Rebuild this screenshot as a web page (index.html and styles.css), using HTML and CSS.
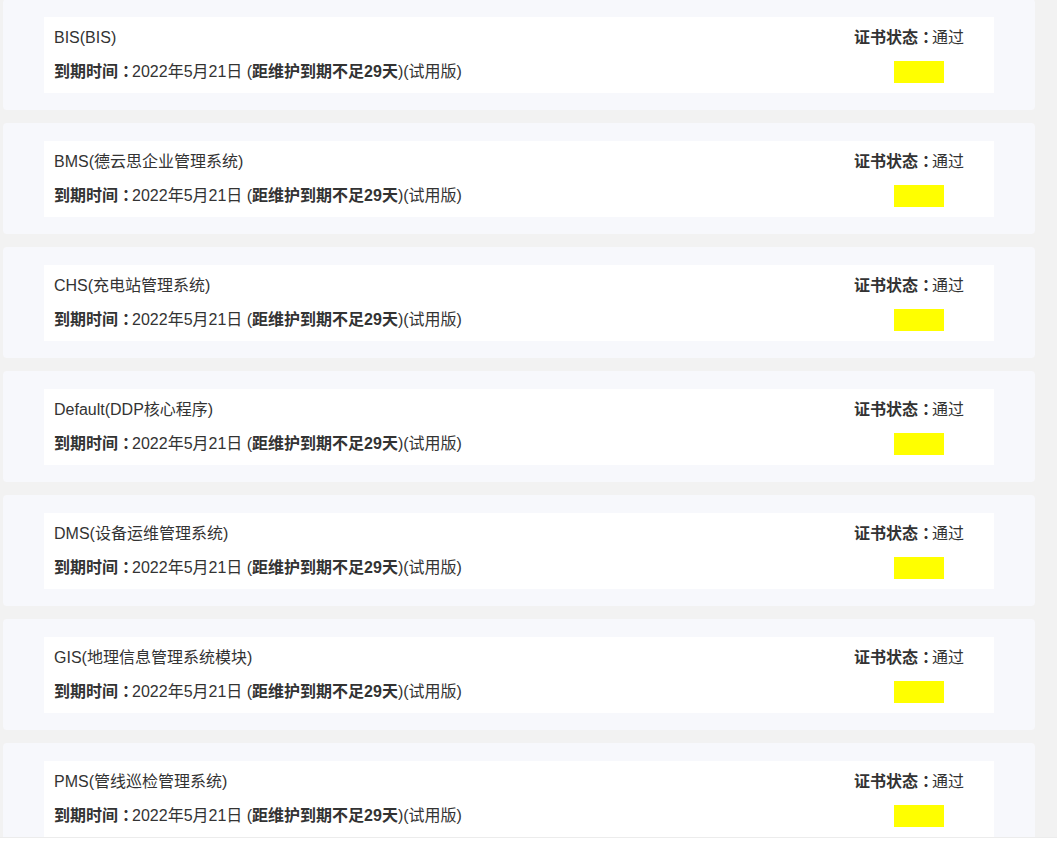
FILE: index.html
```html
<!DOCTYPE html>
<html lang="zh-CN">
<head>
    <meta charset="UTF-8">
    <meta name="viewport" content="width=device-width, initial-scale=1.0">
    <title>证书列表</title>
    <link rel="stylesheet" href="styles.css">
</head>
<body>
    <div id="main">
        <div id="list">
            <div class="card">
                <div class="cert">
                    <div class="cert-info">
                        <div class="line">BIS(BIS)</div>
                        <div class="line"><b>到期时间<span class="colon">：</span></b>2022年5月21日 (<b>距维护到期不足29天</b>)(试用版)</div>
                    </div>
                    <div class="cert-state">
                        <div class="line"><b>证书状态<span class="colon">：</span></b>通过</div>
                        <div class="flag"></div>
                    </div>
                </div>
            </div>
            <div class="card">
                <div class="cert">
                    <div class="cert-info">
                        <div class="line">BMS(德云思企业管理系统)</div>
                        <div class="line"><b>到期时间<span class="colon">：</span></b>2022年5月21日 (<b>距维护到期不足29天</b>)(试用版)</div>
                    </div>
                    <div class="cert-state">
                        <div class="line"><b>证书状态<span class="colon">：</span></b>通过</div>
                        <div class="flag"></div>
                    </div>
                </div>
            </div>
            <div class="card">
                <div class="cert">
                    <div class="cert-info">
                        <div class="line">CHS(充电站管理系统)</div>
                        <div class="line"><b>到期时间<span class="colon">：</span></b>2022年5月21日 (<b>距维护到期不足29天</b>)(试用版)</div>
                    </div>
                    <div class="cert-state">
                        <div class="line"><b>证书状态<span class="colon">：</span></b>通过</div>
                        <div class="flag"></div>
                    </div>
                </div>
            </div>
            <div class="card">
                <div class="cert">
                    <div class="cert-info">
                        <div class="line">Default(DDP核心程序)</div>
                        <div class="line"><b>到期时间<span class="colon">：</span></b>2022年5月21日 (<b>距维护到期不足29天</b>)(试用版)</div>
                    </div>
                    <div class="cert-state">
                        <div class="line"><b>证书状态<span class="colon">：</span></b>通过</div>
                        <div class="flag"></div>
                    </div>
                </div>
            </div>
            <div class="card">
                <div class="cert">
                    <div class="cert-info">
                        <div class="line">DMS(设备运维管理系统)</div>
                        <div class="line"><b>到期时间<span class="colon">：</span></b>2022年5月21日 (<b>距维护到期不足29天</b>)(试用版)</div>
                    </div>
                    <div class="cert-state">
                        <div class="line"><b>证书状态<span class="colon">：</span></b>通过</div>
                        <div class="flag"></div>
                    </div>
                </div>
            </div>
            <div class="card">
                <div class="cert">
                    <div class="cert-info">
                        <div class="line">GIS(地理信息管理系统模块)</div>
                        <div class="line"><b>到期时间<span class="colon">：</span></b>2022年5月21日 (<b>距维护到期不足29天</b>)(试用版)</div>
                    </div>
                    <div class="cert-state">
                        <div class="line"><b>证书状态<span class="colon">：</span></b>通过</div>
                        <div class="flag"></div>
                    </div>
                </div>
            </div>
            <div class="card">
                <div class="cert">
                    <div class="cert-info">
                        <div class="line">PMS(管线巡检管理系统)</div>
                        <div class="line"><b>到期时间<span class="colon">：</span></b>2022年5月21日 (<b>距维护到期不足29天</b>)(试用版)</div>
                    </div>
                    <div class="cert-state">
                        <div class="line"><b>证书状态<span class="colon">：</span></b>通过</div>
                        <div class="flag"></div>
                    </div>
                </div>
            </div>
        </div>
    </div>
    <div id="footer"></div>
</body>
</html>
```

FILE: styles.css
```css
html, body {
    height: 100%;
}
body {
    margin: 0;
    display: flex;
    flex-direction: column;
    overflow: hidden;
    background-color: #f2f2f2;
    color: #333;
    font-family: "Liberation Sans", "Noto Sans CJK SC", sans-serif;
    font-size: 16px;
}
#main {
    height: 837px;
    flex-shrink: 0;
    overflow: hidden;
}
#list {
    width: 1032px;
    margin: -1px 0 0 3px;
    display: flex;
    flex-direction: column;
    gap: 13px;
}
.card {
    background-color: #f7f8fc;
    border-radius: 4px;
    padding: 18px 41px 17px;
}
.cert {
    background-color: #fff;
    display: flex;
    justify-content: space-between;
    padding: 9px 30px 9px 10px;
}
.cert-info,
.cert-state {
    display: flex;
    flex-direction: column;
    gap: 10px;
}
.line {
    line-height: 24px;
    white-space: nowrap;
}
.line b {
    font-weight: bold;
}
/* full-width colon, centred like the original font draws it */
.colon {
    margin-left: 4px;
    letter-spacing: -6px;
}
.flag {
    width: 50px;
    height: 22px;
    margin: 1px 0 0 40px;
    background-color: #ffff00;
}
#footer {
    flex: 1;
    background-color: #fff;
    border-top: 1px solid #ececec;
}
```
